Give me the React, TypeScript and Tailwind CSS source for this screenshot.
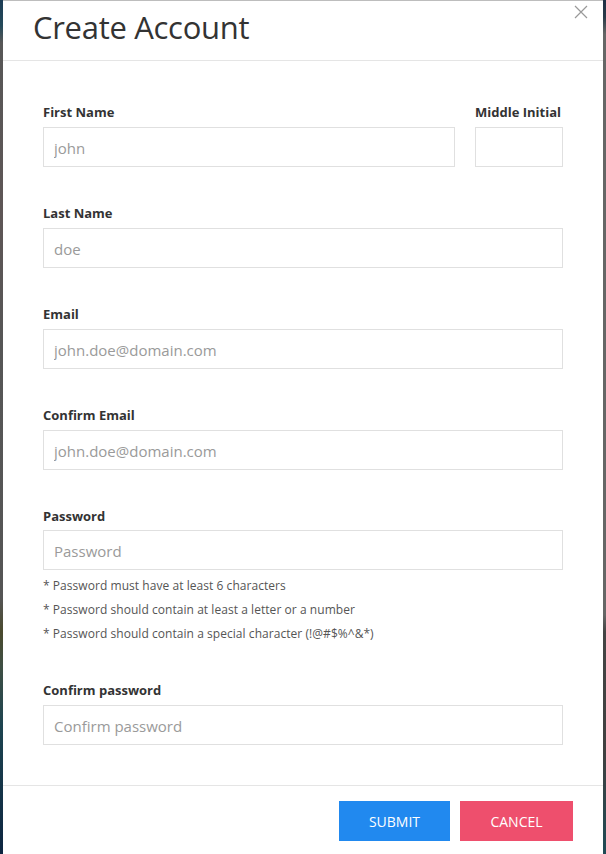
import type { FC } from 'react';

const fields = [
  { label: 'Last Name', placeholder: 'doe' },
  { label: 'Email', placeholder: 'john.doe@domain.com' },
  { label: 'Confirm Email', placeholder: 'john.doe@domain.com' },
];

const hints = [
  '* Password must have at least 6 characters',
  '* Password should contain at least a letter or a number',
  '* Password should contain a special character (!@#$%^&*)',
];

const Label: FC<{ text: string }> = ({ text }) => (
  <label className="block h-[18px] text-[13px] leading-[18px] font-bold text-[#333] mb-[6px]">{text}</label>
);

const Input: FC<{ placeholder?: string; className?: string }> = ({ placeholder, className }) => (
  <input
    placeholder={placeholder}
    className={`block h-10 w-full border border-[#e0e0e0] bg-white px-[10px] pt-[2px] text-[15px] text-[#333] outline-none placeholder:text-[#9a9a9a] ${className ?? ''}`}
  />
);

const App: FC = () => {
  return (
    <div
      className="flex h-[854px] w-[606px] overflow-hidden bg-[#555]"
      style={{ fontFamily: '"Open Sans", "Noto Sans", sans-serif' }}
    >
      <div className="w-[3px] shrink-0 bg-[linear-gradient(to_bottom,#1d3c55_0%,#244a5a_3%,#575757_5%,#5e5656_25%,#565656_40%,#555_70%,#4a4a2e_74%,#3f4f44_78%,#1d4450_85%,#0d2540_100%)]" />
      <div className="flex w-[600px] flex-col border-t border-[#bdbdbd] bg-white">
        {/* header */}
        <div className="relative flex h-[60px] items-center border-b border-[#e5e5e5] px-[30px]">
          <h1 className="-mt-[6px] text-[31px] font-normal leading-none tracking-[-0.3px] text-[#333]">Create Account</h1>
          <button className="absolute right-[14px] top-[3px] text-[#999]">
            <svg width="16" height="16" viewBox="0 0 16 16" fill="none" stroke="currentColor" strokeWidth="1.2">
              <path d="M2 2l12 12M14 2L2 14" />
            </svg>
          </button>
        </div>

        {/* body */}
        <div className="flex flex-col px-10 pt-[42px] pb-10">
          <div className="flex gap-5">
            <div className="flex-1">
              <Label text="First Name" />
              <Input placeholder="john" />
            </div>
            <div className="w-[88px]">
              <Label text="Middle Initial" />
              <Input />
            </div>
          </div>

          {fields.map(f => (
            <div key={f.label} className="mt-[37px]">
              <Label text={f.label} />
              <Input placeholder={f.placeholder} />
            </div>
          ))}

          <div className="mt-[37px]">
            <label className="block h-[18px] text-[13px] leading-[18px] font-bold text-[#333] mb-[5px]">Password</label>
            <Input placeholder="Password" />
            <div className="mt-[4px] text-[12px] leading-6 tracking-[0.05px] text-[#555]">
              {hints.map(h => (
                <p key={h}>{h}</p>
              ))}
            </div>
          </div>

          <div className="mt-[35px]">
            <Label text="Confirm password" />
            <Input placeholder="Confirm password" />
          </div>
        </div>

        {/* footer */}
        <div className="flex justify-end gap-[10px] border-t border-[#e5e5e5] px-[30px] pt-[15px]">
          <button className="h-10 w-[111px] bg-[#2189ef] text-[14px] text-white uppercase">Submit</button>
          <button className="h-10 w-[113px] bg-[#ee4f6d] text-[14px] text-white uppercase">Cancel</button>
        </div>
      </div>
      <div className="w-[3px] shrink-0 bg-[linear-gradient(to_bottom,#1e2f45_0%,#2a3a48_2%,#666_4%,#666_72%,#444_74%,#404040_88%,#1f4a55_100%)]" />
    </div>
  );
};

export default App;
